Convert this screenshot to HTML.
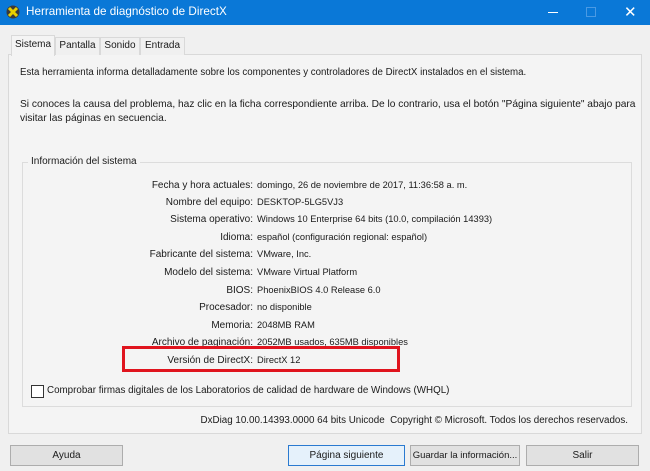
<!DOCTYPE html>
<html><head><meta charset="utf-8"><style>
*{box-sizing:border-box;margin:0;padding:0}
body{width:650px;height:471px;background:#f0f0f0;font-family:"Liberation Sans",sans-serif;font-size:10px;color:#1a1a1a;position:relative;overflow:hidden}
.a{position:absolute;white-space:nowrap}
.title{left:0;top:0;width:650px;height:25px;background:#0a78d7;color:#fff;font-size:12px}
.tab{top:37px;height:18px;border:1px solid #d9d9d9;border-bottom:none;background:#f0f0f0;text-align:center;line-height:16px;font-size:10px}
.panel{left:8px;top:54px;width:634px;height:380px;border:1px solid #d9d9d9;background:#f4f4f4}
.grp{left:22px;top:162px;width:610px;height:245px;border:1px solid #dcdcdc}
.l{right:397px;text-align:right;font-size:10px;margin-top:1px}
.v{left:257px;font-size:9.3px}
.btn{top:445px;height:21px;border:1px solid #adadad;background:#e1e1e1;text-align:center;line-height:19px;font-size:10px}
</style></head><body>
<div class="a title">
<svg class="a" style="left:6px;top:5px" width="14" height="14" viewBox="0 0 14 14"><circle cx="7" cy="7" r="6.5" fill="#3a3a3a"/><path d="M3 3l8 8M11 3l-8 8" stroke="#e8d000" stroke-width="3"/></svg>
<span class="a" style="left:26px;top:5px;font-size:11.7px">Herramienta de diagnóstico de DirectX</span>
<div class="a" style="left:548px;top:12px;width:10px;height:1px;background:#fff"></div>
<div class="a" style="left:586px;top:7px;width:10px;height:10px;border:1px solid #4a9ae4"></div>
<span class="a" style="left:624px;top:3px;font-size:15px">✕</span>
</div>
<div class="a panel"></div>
<div class="a tab" style="left:11px;top:35px;width:44px;height:21px;background:#f4f4f4;line-height:18px">Sistema</div>
<div class="a tab" style="left:55px;width:45px">Pantalla</div>
<div class="a tab" style="left:100px;width:40px">Sonido</div>
<div class="a tab" style="left:140px;width:45px">Entrada</div>
<span class="a" style="left:20px;top:67px;font-size:9.7px">Esta herramienta informa detalladamente sobre los componentes y controladores de DirectX instalados en el sistema.</span>
<span class="a" style="left:20px;top:99px;font-size:10.2px">Si conoces la causa del problema, haz clic en la ficha correspondiente arriba. De lo contrario, usa el botón "Página siguiente" abajo para</span>
<span class="a" style="left:20px;top:113px;font-size:10.2px">visitar las páginas en secuencia.</span>
<div class="a grp"></div>
<span class="a" style="left:28px;top:156px;background:#f4f4f4;padding:0 3px">Información del sistema</span>
<span class="a l" style="top:179px">Fecha y hora actuales:</span><span class="a v" style="top:180px">domingo, 26 de noviembre de 2017, 11:36:58 a. m.</span>
<span class="a l" style="top:196px">Nombre del equipo:</span><span class="a v" style="top:197px">DESKTOP-5LG5VJ3</span>
<span class="a l" style="top:213px">Sistema operativo:</span><span class="a v" style="top:214px">Windows 10 Enterprise 64 bits (10.0, compilación 14393)</span>
<span class="a l" style="top:231px">Idioma:</span><span class="a v" style="top:232px">español (configuración regional: español)</span>
<span class="a l" style="top:248px">Fabricante del sistema:</span><span class="a v" style="top:249px">VMware, Inc.</span>
<span class="a l" style="top:266px">Modelo del sistema:</span><span class="a v" style="top:267px">VMware Virtual Platform</span>
<span class="a l" style="top:284px">BIOS:</span><span class="a v" style="top:285px">PhoenixBIOS 4.0 Release 6.0</span>
<span class="a l" style="top:301px">Procesador:</span><span class="a v" style="top:302px">no disponible</span>
<span class="a l" style="top:319px">Memoria:</span><span class="a v" style="top:320px">2048MB RAM</span>
<span class="a l" style="top:336px">Archivo de paginación:</span><span class="a v" style="top:337px">2052MB usados, 635MB disponibles</span>
<span class="a l" style="top:354px">Versión de DirectX:</span><span class="a v" style="top:355px">DirectX 12</span>
<div class="a" style="left:122px;top:346px;width:278px;height:26px;border:3px solid #e0141e"></div>
<div class="a" style="left:31px;top:385px;width:13px;height:13px;border:1px solid #333;background:#fff"></div>
<span class="a" style="left:47px;top:385px;font-size:9.8px">Comprobar firmas digitales de los Laboratorios de calidad de hardware de Windows (WHQL)</span>
<span class="a" style="right:22px;top:415px;font-size:9.8px">DxDiag 10.00.14393.0000 64 bits Unicode&nbsp; Copyright © Microsoft. Todos los derechos reservados.</span>
<div class="a btn" style="left:10px;width:113px">Ayuda</div>
<div class="a btn" style="left:288px;width:117px;border:1px solid #2a7ad0;background:#e5f1fb">Página siguiente</div>
<div class="a btn" style="left:410px;width:110px;font-size:9.5px">Guardar la información...</div>
<div class="a btn" style="left:526px;width:113px">Salir</div>
</body></html>
